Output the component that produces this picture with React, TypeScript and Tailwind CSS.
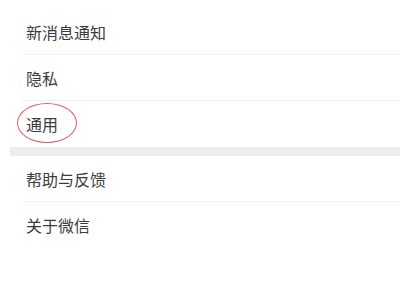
import React from "react";

const font = { fontFamily: '"Noto Sans CJK SC", "Noto Sans", sans-serif' };

function Row({ label, border = true, children }: { label: string; border?: boolean; children?: React.ReactNode }) {
  return (
    <div
      className={
        "relative ml-[23px] h-[46px] flex items-center pl-[3px] text-[16px] text-[#3c3c3c] " +
        (border ? "border-b border-[#f0f0f0]" : "")
      }
    >
      {children}
      <span className="relative">{label}</span>
    </div>
  );
}

export default function App() {
  return (
    <div className="w-[400px] h-[300px] bg-white pt-[9px] overflow-hidden" style={font}>
      <Row label="新消息通知" />
      <Row label="隐私" />
      <Row label="通用" border={false}>
        <div className="absolute left-[-6px] top-[2px] w-[60px] h-[40px] rounded-[50%] border-[1.5px] border-[#e25c70]" />
      </Row>
      <div className="ml-[10px] h-[9px] bg-[#ededed]" />
      <Row label="帮助与反馈" />
      <Row label="关于微信" border={false} />
    </div>
  );
}
